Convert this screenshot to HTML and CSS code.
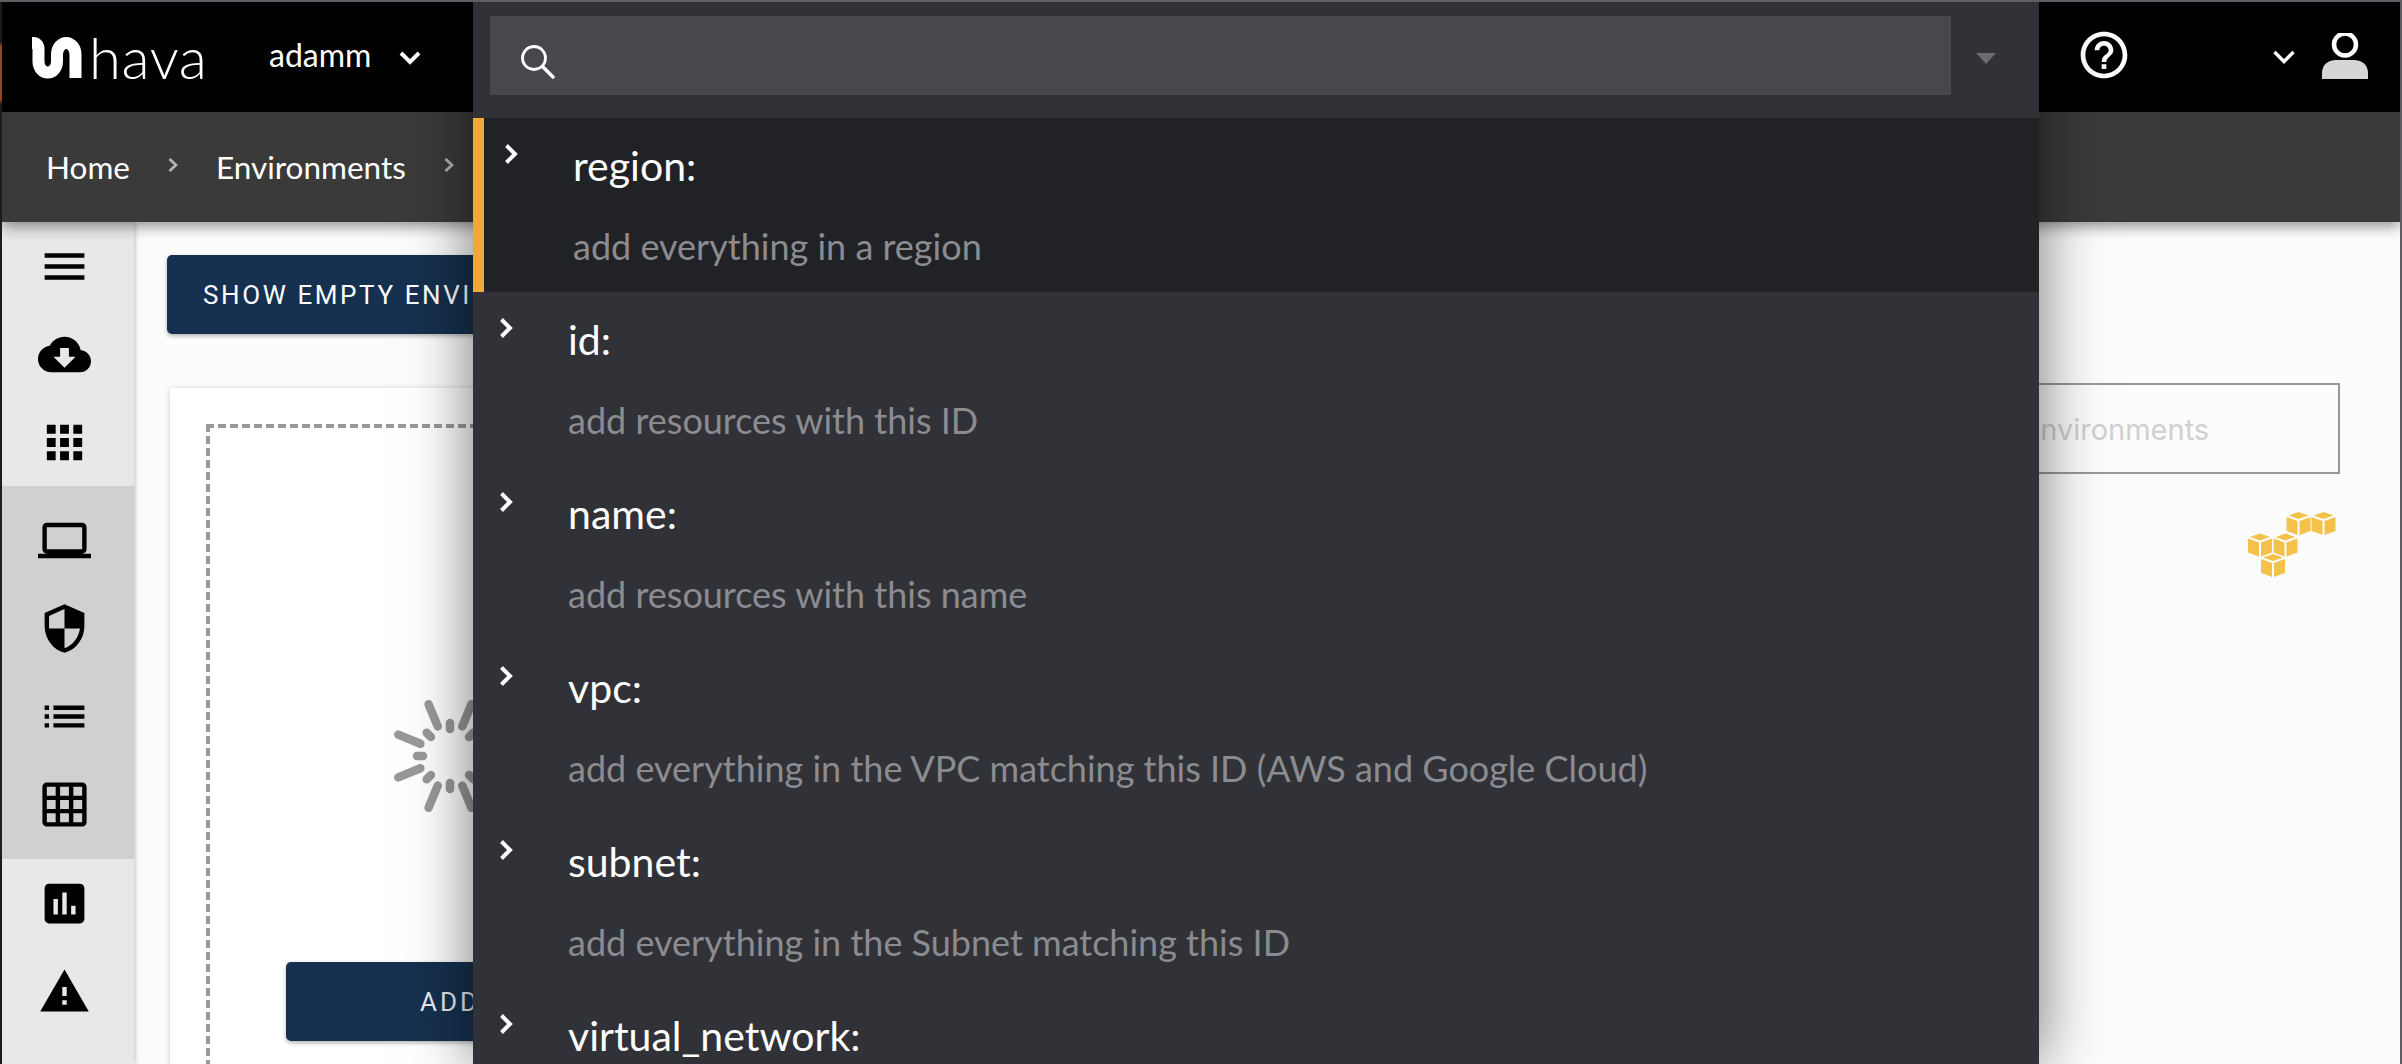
FILE: index.html
```html
<!DOCTYPE html>
<html lang="en">
<head>
<meta charset="utf-8">
<title>Hava</title>
<link rel="stylesheet" href="styles.css">
</head>
<body>
<div class="app">
  <header class="topbar">
    <div class="brand">
      <svg class="logo" viewBox="0 0 52 42"><path d="M0 6H1Q6.500 6 6.500 12V24.500A9.250 11 0 0 0 25 24.500V17.500A9.250 11.500 0 0 1 43.500 17.500V41" fill="none" stroke="#fff" stroke-width="12"/></svg>
      <span class="wordmark">hava</span>
    </div>
    <span class="account">adamm</span>
    <svg class="chev-down" viewBox="0 0 22 14"><path d="M2 2l9 9 9-9" fill="none" stroke="#fff" stroke-width="4"/></svg>
    <div class="topbar-right">
      <svg class="help" viewBox="0 0 24 24"><path fill="#fff" d="M11 18h2v-2h-2v2zm1-16C6.48 2 2 6.48 2 12s4.48 10 10 10 10-4.48 10-10S17.52 2 12 2zm0 18c-4.41 0-8-3.59-8-8s3.59-8 8-8 8 3.59 8 8-3.59 8-8 8zm0-14c-2.21 0-4 1.79-4 4h2c0-1.1.9-2 2-2s2 .9 2 2c0 2-3 1.75-3 5h2c0-2.25 3-2.5 3-5 0-2.21-1.79-4-4-4z"/></svg>
      <svg class="chev-thin" viewBox="0 0 22 14"><path d="M1.500 2l9.500 9.500 9.500-9.500" fill="none" stroke="#fff" stroke-width="3.400"/></svg>
      <svg class="user" viewBox="0 0 46 46"><circle cx="23" cy="11.500" r="11" fill="none" stroke="#fff" stroke-width="4.500"/><path fill="#d6d6d6" d="M0 46V40C0 32 6 27 14 27H32C40 27 46 32 46 40V46Z"/></svg>
    </div>
  </header>

  <nav class="crumbs">
    <span>Home</span>
    <svg class="crumb-sep" viewBox="0 0 10 14"><path d="M1.500 1L8 7l-6.500 6" fill="none" stroke="#b4b4b4" stroke-width="2.800"/></svg>
    <span>Environments</span>
    <svg class="crumb-sep" viewBox="0 0 10 14"><path d="M1.500 1L8 7l-6.500 6" fill="none" stroke="#b4b4b4" stroke-width="2.800"/></svg>
  </nav>

  <div class="body">
    <aside class="sidebar">
      <div class="side-item"><svg viewBox="0 0 24 24"><path d="M3 18h18v-2H3v2zm0-5h18v-2H3v2zm0-7v2h18V6H3z"/></svg></div>
      <div class="side-item"><svg viewBox="0 0 24 24"><path d="M19.35 10.040C18.670 6.590 15.640 4 12 4 9.110 4 6.600 5.640 5.350 8.040 2.340 8.360 0 10.910 0 14c0 3.310 2.690 6 6 6h13c2.760 0 5-2.240 5-5 0-2.640-2.050-4.780-4.650-4.960zM17 13l-5 5-5-5h3V9h4v4h3z"/></svg></div>
      <div class="side-item"><svg viewBox="0 0 24 24"><path d="M4 8h4V4H4v4zm6 12h4v-4h-4v4zm-6 0h4v-4H4v4zm0-6h4v-4H4v4zm6 0h4v-4h-4v4zm6-10v4h4V4h-4zm-6 4h4V4h-4v4zm6 6h4v-4h-4v4zm0 6h4v-4h-4v4z"/></svg></div>
      <div class="side-group">
        <div class="side-item"><svg viewBox="0 0 24 24"><path d="M20 18c1.100 0 1.990-.9 1.990-2L22 6c0-1.100-.9-2-2-2H4c-1.100 0-2 .9-2 2v10c0 1.100.9 2 2 2H0v2h24v-2h-4zM4 6h16v10H4V6z"/></svg></div>
        <div class="side-item"><svg viewBox="0 0 24 24"><path d="M12 1L3 5v6c0 5.550 3.840 10.740 9 12 5.160-1.260 9-6.450 9-12V5l-9-4zm0 10.990h7c-.53 4.120-3.280 7.790-7 8.940V12H5V6.300l7-3.110v8.800z"/></svg></div>
        <div class="side-item"><svg viewBox="0 0 24 24"><path d="M3 13h2v-2H3v2zm0 4h2v-2H3v2zm0-8h2V7H3v2zm4 4h14v-2H7v2zm0 4h14v-2H7v2zM7 7v2h14V7H7z"/></svg></div>
        <div class="side-item"><svg viewBox="0 0 24 24"><path d="M20 2H4c-1.100 0-2 .9-2 2v16c0 1.100.9 2 2 2h16c1.100 0 2-.9 2-2V4c0-1.100-.9-2-2-2zM8 20H4v-4h4v4zm0-6H4v-4h4v4zm0-6H4V4h4v4zm6 12h-4v-4h4v4zm0-6h-4v-4h4v4zm0-6h-4V4h4v4zm6 12h-4v-4h4v4zm0-6h-4v-4h4v4zm0-6h-4V4h4v4z"/></svg></div>
      </div>
      <div class="side-item"><svg viewBox="0 0 24 24"><path d="M19 3H5c-1.100 0-2 .9-2 2v14c0 1.100.9 2 2 2h14c1.100 0 2-.9 2-2V5c0-1.100-.9-2-2-2zM9 17H7v-7h2v7zm4 0h-2V7h2v10zm4 0h-2v-4h2v4z"/></svg></div>
      <div class="side-item"><svg viewBox="0 0 24 24"><path d="M1 21h22L12 2 1 21zm12-3h-2v-2h2v2zm0-4h-2v-4h2v4z"/></svg></div>
    </aside>

    <main class="main">
      <button class="btn btn-show">SHOW EMPTY ENVIRONMENTS</button>
      <div class="content">
        <section class="card">
          <div class="dropzone">
            <svg class="spinner" viewBox="-60 -60 120 120">
              <g stroke="#999" stroke-width="8.500" stroke-linecap="round">
                <line y1="-27" y2="-33"/><line y1="-27" y2="-33" transform="rotate(45)"/><line y1="-27" y2="-33" transform="rotate(90)"/><line y1="-27" y2="-33" transform="rotate(135)"/><line y1="-27" y2="-33" transform="rotate(180)"/><line y1="-27" y2="-33" transform="rotate(225)"/><line y1="-27" y2="-33" transform="rotate(270)"/><line y1="-27" y2="-33" transform="rotate(315)"/>
                <line y1="-32" y2="-56" transform="rotate(22.500)"/><line y1="-32" y2="-56" transform="rotate(67.500)"/><line y1="-32" y2="-56" transform="rotate(112.500)"/><line y1="-32" y2="-56" transform="rotate(157.500)"/><line y1="-32" y2="-56" transform="rotate(202.500)"/><line y1="-32" y2="-56" transform="rotate(247.500)"/><line y1="-32" y2="-56" transform="rotate(292.500)"/><line y1="-32" y2="-56" transform="rotate(337.500)"/>
              </g>
            </svg>
            <button class="btn btn-add">ADD</button>
          </div>
        </section>
        <div class="side-col">
          <div class="filter">Filter Environments</div>
          <div class="env-head">
            <span class="env-name">demo</span>
            <svg class="aws" viewBox="0 0 88 65">
              <defs><g id="cube" fill="#f4c24a"><polygon points="12,0 22,3.500 12,7 2,3.500"/><polygon points="0,5 11,9 11,23 0,19"/><polygon points="24,5 13,9 13,23 24,19"/></g></defs>
              <use href="#cube" x="38.500"/><use href="#cube" x="63.500"/><use href="#cube" y="21.500"/><use href="#cube" x="25.500" y="21.500"/><use href="#cube" x="13" y="42"/>
            </svg>
          </div>
        </div>
      </div>
    </main>
  </div>

  <div class="picker">
    <div class="picker-bar">
      <div class="picker-input">
        <svg class="search" viewBox="0 0 34 34"><circle cx="13" cy="13" r="11.500" fill="none" stroke="#fff" stroke-width="2.800"/><path d="M21.500 21.500L32 32" fill="none" stroke="#fff" stroke-width="3.400" stroke-linecap="round"/></svg>
      </div>
      <span class="picker-caret"></span>
    </div>
    <ul class="picker-list">
      <li class="opt opt-active"><svg class="opt-chev" viewBox="0 0 15 22"><path d="M2.500 2.500L11 11l-8.500 8.500" fill="none" stroke="#fff" stroke-width="4"/></svg><div><div class="opt-title">region:</div><div class="opt-desc">add everything in a region</div></div></li>
      <li class="opt"><svg class="opt-chev" viewBox="0 0 15 22"><path d="M2.500 2.500L11 11l-8.500 8.500" fill="none" stroke="#fff" stroke-width="4"/></svg><div><div class="opt-title">id:</div><div class="opt-desc">add resources with this ID</div></div></li>
      <li class="opt"><svg class="opt-chev" viewBox="0 0 15 22"><path d="M2.500 2.500L11 11l-8.500 8.500" fill="none" stroke="#fff" stroke-width="4"/></svg><div><div class="opt-title">name:</div><div class="opt-desc">add resources with this name</div></div></li>
      <li class="opt"><svg class="opt-chev" viewBox="0 0 15 22"><path d="M2.500 2.500L11 11l-8.500 8.500" fill="none" stroke="#fff" stroke-width="4"/></svg><div><div class="opt-title">vpc:</div><div class="opt-desc">add everything in the VPC matching this ID (AWS and Google Cloud)</div></div></li>
      <li class="opt"><svg class="opt-chev" viewBox="0 0 15 22"><path d="M2.500 2.500L11 11l-8.500 8.500" fill="none" stroke="#fff" stroke-width="4"/></svg><div><div class="opt-title">subnet:</div><div class="opt-desc">add everything in the Subnet matching this ID</div></div></li>
      <li class="opt"><svg class="opt-chev" viewBox="0 0 15 22"><path d="M2.500 2.500L11 11l-8.500 8.500" fill="none" stroke="#fff" stroke-width="4"/></svg><div><div class="opt-title">virtual_network:</div></div></li>
    </ul>
  </div>
</div>
</body>
</html>
```

FILE: styles.css
```css
* { box-sizing: border-box; }
html, body { height: 100%; }
body {
  margin: 0;
  overflow: hidden;
  background-color: #5e5e64;
  background-image: linear-gradient(#1c1c1c 40px, #8f4520 44px, #8f4520 98px, #1c1c1c 102px);
  background-size: 2px 100%;
  background-position: 0 2px;
  background-repeat: no-repeat;
  font-family: Lato, "Noto Sans", sans-serif;
}
.app {
  position: relative;
  display: flex;
  flex-direction: column;
  height: calc(100vh - 2px);
  margin: 2px 2px 0;
  overflow: hidden;
}
.topbar {
  display: flex;
  align-items: center;
  height: 110px;
  flex: none;
  background: #000;
  color: #fff;
  padding-left: 30px;
  position: relative;
  z-index: 3;
}
.brand { display: flex; align-items: center; width: 237px; }
.logo { width: 52px; height: 42px; margin-top: 1px; }
.wordmark { font-family: Lato, sans-serif; font-weight: 300; font-size: 58px; line-height: 60px; letter-spacing: .6px; margin-left: 5px; margin-top: -1px; }
.account { font-size: 32px; line-height: 40px; width: 130px; margin-top: -5px; }
.chev-down { width: 22px; height: 14px; margin-top: 2px; }
.topbar-right { margin-left: auto; display: flex; align-items: center; padding-right: 32px; }
.help { width: 56px; height: 56px; margin-top: -4px; }
.chev-thin { width: 22px; height: 14px; margin-left: 141px; }
.user { width: 46px; height: 46px; margin-left: 27px; margin-top: -2px; }

.crumbs {
  display: flex;
  align-items: center;
  flex: none;
  height: 110px;
  padding-left: 44px;
  background: #3a3a3a;
  color: #fff;
  font-size: 31.5px;
  box-shadow: 0 4px 14px rgba(0, 0, 0, .45);
  position: relative;
  z-index: 2;
}
.crumb-sep { width: 10px; height: 14px; margin: -4px 38px 0; }

.body { display: flex; flex: 1; min-height: 0; }
.sidebar {
  width: 132px;
  flex: none;
  background: #e8e8e8;
  box-shadow: 1px 0 5px rgba(0, 0, 0, .25);
  position: relative;
  z-index: 1;
}
.side-item { display: flex; align-items: center; justify-content: center; height: 88px; padding-right: 8px; }
.side-item svg { width: 53px; height: 53px; fill: #000; }
.side-group { background: #d0d0d0; padding: 10px 0 11px; }

.main {
  flex: 1;
  min-width: 0;
  display: flex;
  flex-direction: column;
  align-items: flex-start;
  background: #fcfcfc;
  padding: 33px 60px 0 33px;
}
.btn {
  height: 79px;
  border: 0;
  border-radius: 5px;
  background: #16304f;
  color: #fff;
  font-family: Roboto, sans-serif;
  font-size: 26px;
  letter-spacing: 2.6px;
  white-space: nowrap;
  box-shadow: 0 2px 4px rgba(0, 0, 0, .3);
}
.btn-show { padding: 0 36px; flex: none; }
.content { display: flex; align-self: stretch; gap: 40px; margin-top: 49px; flex: 1; }
.card {
  width: 560px;
  flex: none;
  margin: 5px 0 0 3px;
  padding: 36px 36px 0;
  background: #fff;
  box-shadow: 0 1px 6px rgba(0, 0, 0, .2);
}
.dropzone {
  display: flex;
  flex-direction: column;
  align-items: center;
  height: 800px;
  border: 4px dashed #999;
  padding-top: 268px;
}
.spinner { width: 120px; height: 120px; flex: none; }
.btn-add { width: 328px; margin-top: 146px; flex: none; letter-spacing: 3px; color: #e8edf3; }
.side-col { flex: 1; min-width: 0; display: flex; flex-direction: column; align-items: flex-end; }
.filter {
  width: 600px;
  height: 91px;
  border: 2px solid #999;
  padding: 2px 0 0 204px;
  display: flex;
  align-items: center;
  font-family: Inter, sans-serif;
  font-size: 29px;
  white-space: nowrap;
  color: #d0d0d0;
}
.env-head { display: flex; align-self: stretch; align-items: center; justify-content: flex-end; margin-top: 38px; height: 65px; }
.env-name { font-family: Inter, sans-serif; font-size: 30px; color: #222; margin-right: 208px; }
.aws { width: 88px; height: 65px; margin-right: 4px; }

.picker {
  position: absolute;
  left: 471px;
  top: 0;
  bottom: 0;
  width: 1566px;
  background: #313237;
  box-shadow: 0 0 60px rgba(0, 0, 0, .55);
  overflow: hidden;
  z-index: 5;
}
.picker-bar { display: flex; align-items: flex-start; height: 116px; padding: 14px 0 0 17px; }
.picker-input { width: 1461px; height: 79px; background: #47474d; display: flex; align-items: center; padding-left: 31px; }
.search { width: 34px; height: 34px; margin-top: 13px; }
.picker-caret {
  width: 0;
  height: 0;
  margin: 37px 0 0 25px;
  border-left: 10px solid transparent;
  border-right: 10px solid transparent;
  border-top: 11px solid #6b6b70;
}
.picker-list { list-style: none; margin: 0; padding: 0; }
.opt { display: flex; height: 174px; padding: 25px 0 0 26px; }
.opt-active { background: #212226; border-left: 11px solid #f0a83a; padding-left: 20px; }
.opt-chev { width: 15px; height: 22px; margin-right: 54px; flex: none; }
.opt-title { color: #fff; font-size: 41px; line-height: 44px; margin-top: 1px; }
.opt-desc { color: #8b8b90; font-size: 36px; line-height: 40px; margin-top: 38px; white-space: nowrap; }
```
